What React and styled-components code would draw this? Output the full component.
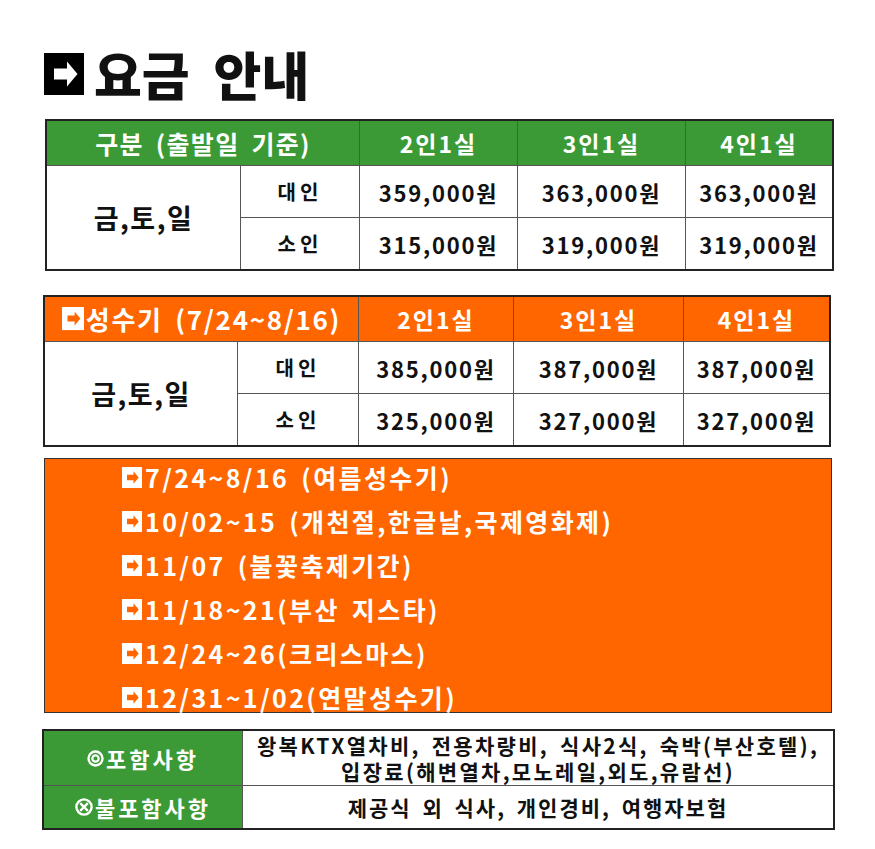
import React from "react";
import styled, { createGlobalStyle } from "styled-components";

const GREEN = "#3b9a35";
const ORANGE = "#ff6600";

const Global = createGlobalStyle`
  html, body { margin: 0; padding: 0; background: #fff; }
  body { font-family: "Noto Sans CJK KR", "Noto Sans", sans-serif; color: #111; }
`;

const Page = styled.div`
  display: flex;
  flex-direction: column;
  padding-top: 50px;
  width: 875px;
`;

const Title = styled.h1`
  display: flex;
  align-items: center;
  gap: 10px;
  margin: 0 0 0 44px;
  height: 48px;
  font-size: 52px;
  font-weight: 900;
  letter-spacing: 0;
  word-spacing: 12px;
  line-height: 1;
`;

const Grid = styled.div`
  display: grid;
  grid-template-columns: ${(p) => p.$cols};
  grid-template-rows: ${(p) => p.$rows};
  gap: 1px;
  background: #555;
  border: 2px solid #222;
  box-sizing: border-box;
  margin-left: ${(p) => p.$left}px;
  margin-top: ${(p) => p.$top}px;
  width: ${(p) => p.$width}px;
`;

const Cell = styled.div`
  display: flex;
  flex-direction: ${(p) => (p.$stack ? "column" : "row")};
  align-items: center;
  justify-content: center;
  gap: ${(p) => (p.$stack ? 0 : 2)}px;
  background: ${(p) => p.$bg || "#fff"};
  color: ${(p) => (p.$bg ? "#fff" : "#111")};
  font-size: ${(p) => p.$size || 23}px;
  font-weight: 700;
  letter-spacing: ${(p) => p.$ls || 0}px;
  word-spacing: ${(p) => p.$ws || 0}px;
  grid-column: span ${(p) => p.$colSpan || 1};
  grid-row: span ${(p) => p.$rowSpan || 1};
  text-align: center;
  line-height: 26px;
  white-space: nowrap;
`;

const PeakBox = styled.div`
  display: flex;
  flex-direction: column;
  gap: 16px;
  margin: 11px 0 0 44px;
  width: 788px;
  height: 255px;
  box-sizing: border-box;
  padding: 4px 0 0 77px;
  background: ${ORANGE};
  border: 1px solid #333;
`;

const PeakItem = styled.div`
  display: flex;
  align-items: center;
  gap: 3px;
  height: 28px;
  color: #fff;
  font-size: 25px;
  font-weight: 700;
  letter-spacing: 2.4px;
  word-spacing: 4px;
  white-space: nowrap;
`;

const ArrowBox = ({ size, bg, fg }) => (
  <svg width={size} height={size * 1.05} viewBox="0 0 40 42" style={{ flex: "none" }}>
    <rect x="0" y="0" width="40" height="42" fill={bg} />
    <path d="M10 15.5 H23 V8.5 L33.5 21 L23 33.5 V26.5 H10 Z" fill={fg} />
  </svg>
);

const RingIcon = () => (
  <svg width="17" height="17" viewBox="0 0 17 17" style={{ flex: "none" }}>
    <circle cx="8.5" cy="8.5" r="7" fill="none" stroke="#fff" strokeWidth="2.4" />
    <circle cx="8.5" cy="8.5" r="3.2" fill="none" stroke="#fff" strokeWidth="2.2" />
  </svg>
);

const CrossIcon = () => (
  <svg width="18" height="18" viewBox="0 0 18 18" style={{ flex: "none" }}>
    <circle cx="9" cy="9" r="7.6" fill="none" stroke="#fff" strokeWidth="2.4" />
    <path d="M5.2 5.2 L12.8 12.8 M12.8 5.2 L5.2 12.8" stroke="#fff" strokeWidth="2.4" />
  </svg>
);

const PriceTable = ({ color, head, headSize, headLs, rows, left, top, width, cols }) => (
  <Grid $cols={cols} $rows="44px 51px 51px" $left={left} $top={top} $width={width}>
    <Cell $bg={color} $colSpan={2} $size={headSize} $ls={headLs} $ws={5}>{head}</Cell>
    <Cell $bg={color} $size={23} $ls={2}>2인1실</Cell>
    <Cell $bg={color} $size={23} $ls={2}>3인1실</Cell>
    <Cell $bg={color} $size={23} $ls={2}>4인1실</Cell>
    <Cell $rowSpan={2} $size={27} $ls={1.5}>금,토,일</Cell>
    {rows.map((r) => (
      <React.Fragment key={r.label}>
        <Cell $size={20} $ls={4}>{r.label}</Cell>
        {r.prices.map((p, i) => (
          <Cell key={i} $size={22} $ls={1.8}>{p}</Cell>
        ))}
      </React.Fragment>
    ))}
  </Grid>
);

const peakDates = [
  "7/24~8/16 (여름성수기)",
  "10/02~15 (개천절,한글날,국제영화제)",
  "11/07 (불꽃축제기간)",
  "11/18~21(부산 지스타)",
  "12/24~26(크리스마스)",
  "12/31~1/02(연말성수기)",
];

export default function App() {
  return (
    <>
      <Global />
      <Page>
        <Title>
          <ArrowBox size={40} bg="#000" fg="#fff" />
          <span>요금 안내</span>
        </Title>

        <PriceTable
          color={GREEN}
          head="구분 (출발일 기준)"
          headSize={25}
          headLs={1.3}
          cols="193px 118px 157px 167px 146px"
          left={45}
          top={21}
          width={789}
          rows={[
            { label: "대인", prices: ["359,000원", "363,000원", "363,000원"] },
            { label: "소인", prices: ["315,000원", "319,000원", "319,000원"] },
          ]}
        />

        <PriceTable
          color={ORANGE}
          head={
            <>
              <ArrowBox size={22} bg="#fff" fg={ORANGE} />
              <span>성수기 (7/24~8/16)</span>
            </>
          }
          headSize={26}
          headLs={1.7}
          cols="192px 120px 154px 169px 145px"
          left={43}
          top={24}
          width={788}
          rows={[
            { label: "대인", prices: ["385,000원", "387,000원", "387,000원"] },
            { label: "소인", prices: ["325,000원", "327,000원", "327,000원"] },
          ]}
        />

        <PeakBox>
          {peakDates.map((d) => (
            <PeakItem key={d}>
              <ArrowBox size={20} bg="#fff" fg={ORANGE} />
              <span>{d}</span>
            </PeakItem>
          ))}
        </PeakBox>

        <Grid $cols="198px 590px" $rows="54px 42px" $left={42} $top={16} $width={793}>
          <Cell $bg={GREEN} $size={22} $ls={3}>
            <RingIcon />
            <span>포함사항</span>
          </Cell>
          <Cell $size={21} $ls={2.3} $ws={4} $stack>
            <span>왕복KTX열차비, 전용차량비, 식사2식, 숙박(부산호텔),</span>
            <span>입장료(해변열차,모노레일,외도,유람선)</span>
          </Cell>
          <Cell $bg={GREEN} $size={22} $ls={3}>
            <CrossIcon />
            <span>불포함사항</span>
          </Cell>
          <Cell $size={21} $ls={2} $ws={4}>제공식 외 식사, 개인경비, 여행자보험</Cell>
        </Grid>
      </Page>
    </>
  );
}
